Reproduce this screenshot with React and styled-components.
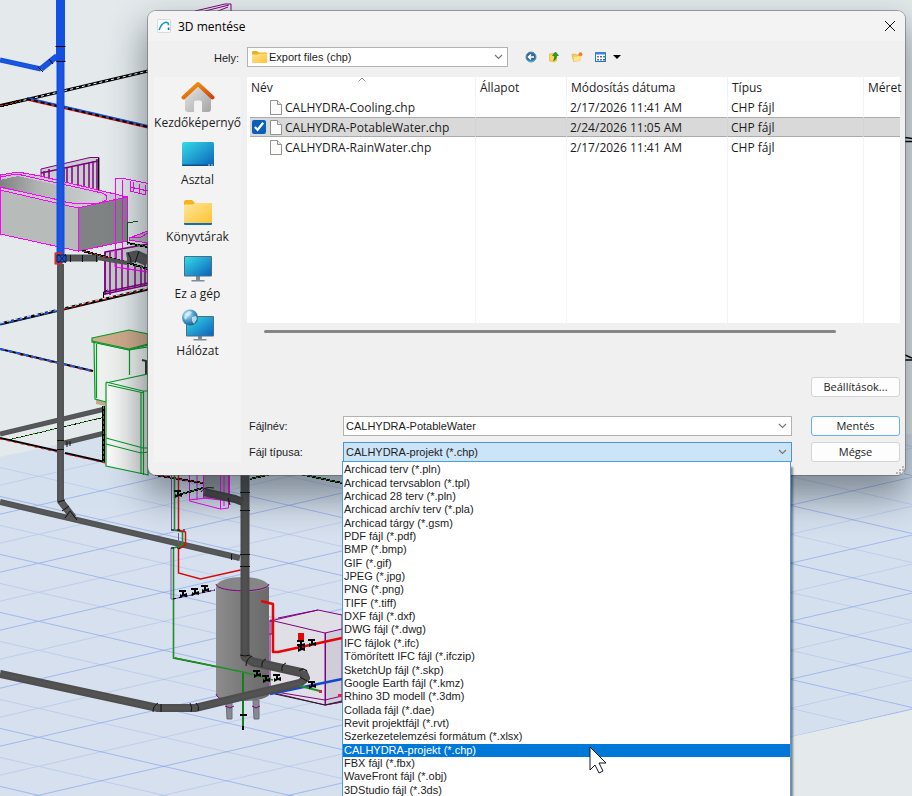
import React, {useState} from 'react';
import styled, {createGlobalStyle} from 'styled-components';

const GlobalStyle = createGlobalStyle`
  * {
    box-sizing: border-box;
  }

  body {
    margin: 0;
    overflow: hidden;
    background: #e4eaec;
  }

  button, input, select {
    font: inherit;
    color: inherit;
  }
`;

const Desktop = styled.main`
  position: relative;
  min-height: 100vh;
  padding: 11px 7px 0 148px;
  overflow: hidden;
  font-family: "Liberation Sans", Arial, sans-serif;
  font-size: 11px;
  color: #1c1c1c;
`;

const SceneSvg = styled.svg`
  position: absolute;
  top: 0;
  left: 0;
  width: 100%;
  height: 100%;
`;

const Dialog = styled.section`
  position: relative;
  background: #f0f0f0;
  border-radius: 8px;
  box-shadow: 0 0 0 1px rgba(90, 90, 90, 0.5), 0 18px 36px 4px rgba(20, 30, 40, 0.45);
`;

const TitleBar = styled.header`
  display: flex;
  align-items: center;
  gap: 7px;
  height: 30px;
  padding: 0 8px 0 9px;
  background: #f3f3f3;
  border-radius: 8px 8px 0 0;
`;

const Title = styled.h1`
  flex: 1;
  margin: 0;
  font-family: "Open Sans", "Noto Sans", sans-serif;
  font-size: 12px;
  font-weight: 400;
  color: #000;
`;

const IconButton = styled.button`
  display: flex;
  align-items: center;
  justify-content: center;
  padding: 0;
  border: 0;
  background: none;
`;

const LocationBar = styled.div`
  display: flex;
  align-items: flex-start;
  height: 36px;
  padding-top: 6px;
`;

const LocationLabel = styled.label`
  width: 91px;
  margin-right: 8px;
  line-height: 22px;
  text-align: right;
`;

const Tools = styled.div`
  display: flex;
  align-items: center;
  gap: 9px;
  height: 20px;
  margin-left: 16px;
`;

const ViewTools = styled.div`
  display: flex;
  align-items: center;
  gap: 6px;
`;

const Field = styled.div`
  position: relative;
  display: flex;
  align-items: center;
  width: ${({$width}) => $width || 'auto'};
  height: 20px;
  border: 1px solid ${({$open}) => ($open ? '#4a95d6' : '#b2b2b2')};
  background: ${({$open}) => ($open ? '#cce4f7' : '#fff')};

  > select, > input {
    flex: 1;
    min-width: 0;
    height: 18px;
    padding: 0 0 0 2px;
    border: 0;
    outline: 0;
    appearance: none;
    background: none;
  }

  > .folder {
    margin-left: 4px;
  }

  > .chevron {
    margin-right: 4px;
    pointer-events: none;
  }
`;

const Body = styled.div`
  display: flex;
  gap: 6px;
  padding: 0 5px 13px 6px;
`;

const Places = styled.nav`
  display: flex;
  flex-direction: column;
  gap: 5px;
  width: 87px;
  padding-top: 4px;
  background: #f3f3f3;
`;

const Place = styled.button`
  display: flex;
  flex-direction: column;
  align-items: center;
  padding: 0;
  border: 0;
  background: none;
  font-family: "Open Sans", "Noto Sans", sans-serif;
  font-size: 12px;
  line-height: 20px;
  white-space: nowrap;
`;

const Content = styled.div`
  flex: 1;
  min-width: 0;
`;

const FileTable = styled.table`
  width: 100%;
  height: 246px;
  table-layout: fixed;
  border-collapse: separate;
  border-spacing: 0;
  background: #fff;
  font-family: "Open Sans", "Noto Sans", sans-serif;
  font-size: 12px;
`;

const HeadCell = styled.th`
  position: relative;
  width: ${({$width}) => $width || 'auto'};
  height: 20px;
  padding: 0 0 0 4px;
  border-left: 1px solid #eef1f8;
  font-weight: 400;
  text-align: left;
  white-space: nowrap;

  &:first-child {
    border-left: 0;
  }
`;

const SortMark = styled.svg`
  position: absolute;
  top: 0;
  left: 111px;
`;

const FileRow = styled.tr`
  td {
    height: ${({$filler}) => ($filler ? 'auto' : '20px')};
    padding: 0 0 0 3px;
    border-left: 1px solid #f1f4fb;
    line-height: 17px;
    white-space: nowrap;
    ${({$selected}) => $selected && `
      background: #d9d9d9;
      border-left-color: #d2d5dc;
      box-shadow: inset 0 1px #ababab, inset 0 -1px #ababab;
    `}
  }

  td:first-child {
    border-left: 3px solid #fff;
    padding-left: 2px;
  }
`;

const FileName = styled.label`
  display: flex;
  align-items: center;
  gap: 3px;
`;

const Tick = styled.input`
  width: 14px;
  height: 14px;
  margin: 0 1px 0 0;
  accent-color: #0a5fb8;
  visibility: ${({checked}) => (checked ? 'visible' : 'hidden')};
`;

const ScrollTrack = styled.div`
  margin: 7px 14px 44px 17px;
`;

const ScrollThumb = styled.div`
  width: 92%;
  height: 3px;
  border-radius: 2px;
  background: #868686;
`;

const Form = styled.form`
  display: grid;
  grid-template-columns: 94px 1fr 89px;
  column-gap: 0;
  row-gap: 6px;
  align-items: center;
  padding-left: 2px;
`;

const Button = styled.button`
  grid-column: 3;
  height: 20px;
  padding: 0;
  border: 1px solid ${({$primary}) => ($primary ? '#69b0e8' : '#d4d4d4')};
  border-radius: 3px;
  background: #fdfdfd;
  font-family: "Open Sans", "Noto Sans", sans-serif;
  font-size: 11px;
  line-height: 18px;
`;

const SettingsButton = styled(Button)`
  margin-bottom: 13px;
`;

const FormField = styled(Field)`
  margin-right: 19px;
`;

const TypeList = styled.ul`
  position: absolute;
  z-index: 2;
  top: 100%;
  left: -2px;
  display: flex;
  flex-direction: column;
  width: calc(100% + 2px);
  height: 336px;
  margin: 0;
  padding: 1px 0 0;
  border: solid #4a9fe3;
  border-width: 1px 1px 0;
  background: #fff;
  box-shadow: 2px 6px 2px rgba(0, 0, 0, 0.45);
  list-style: none;
`;

const TypeOption = styled.li`
  position: relative;
  display: flex;
  flex: 1;
  align-items: center;
  min-height: 0;
  padding-left: 1px;
  line-height: 13px;
  white-space: nowrap;
  background: ${({$active}) => ($active ? '#0078d7' : 'transparent')};
  color: ${({$active}) => ($active ? '#fff' : 'inherit')};
`;

const Pointer = styled.svg`
  position: absolute;
  z-index: 3;
  top: 2px;
  left: 55%;
`;

const Grip = styled.svg`
  position: absolute;
  right: 1px;
  bottom: 1px;
`;

const files = [
  {name: 'CALHYDRA-Cooling.chp', date: '2/17/2026 11:41 AM', type: 'CHP fájl'},
  {name: 'CALHYDRA-PotableWater.chp', date: '2/24/2026 11:05 AM', type: 'CHP fájl'},
  {name: 'CALHYDRA-RainWater.chp', date: '2/17/2026 11:41 AM', type: 'CHP fájl'},
];

const fileTypes = [
  'Archicad terv (*.pln)',
  'Archicad tervsablon (*.tpl)',
  'Archicad 28 terv (*.pln)',
  'Archicad archív terv (*.pla)',
  'Archicad tárgy (*.gsm)',
  'PDF fájl (*.pdf)',
  'BMP (*.bmp)',
  'GIF (*.gif)',
  'JPEG (*.jpg)',
  'PNG (*.png)',
  'TIFF (*.tiff)',
  'DXF fájl (*.dxf)',
  'DWG fájl (*.dwg)',
  'IFC fájlok (*.ifc)',
  'Tömörített IFC fájl (*.ifczip)',
  'SketchUp fájl (*.skp)',
  'Google Earth fájl (*.kmz)',
  'Rhino 3D modell (*.3dm)',
  'Collada fájl (*.dae)',
  'Revit projektfájl (*.rvt)',
  'Szerkezetelemzési formátum (*.xlsx)',
  'CALHYDRA-projekt (*.chp)',
  'FBX fájl (*.fbx)',
  'WaveFront fájl (*.obj)',
  '3DStudio fájl (*.3ds)',
];

const Chevron = () => (
  <svg className="chevron" width="9" height="6" viewBox="0 0 9 6" fill="none" stroke="#777" strokeWidth="1.200" aria-hidden="true">
    <path d="M1 1l3.500 3.500L8 1"/>
  </svg>
);

const Gradients = () => (
  <svg width="0" height="0" style={{position: 'absolute'}} aria-hidden="true">
    <defs>
      <linearGradient id="screen" x1="0" y1="0" x2="1" y2="1">
        <stop offset="0" stopColor="#35dbe6"/>
        <stop offset="1" stopColor="#0b62bd"/>
      </linearGradient>
      <linearGradient id="folder" x1="0" y1="0" x2="1" y2="1">
        <stop offset="0" stopColor="#ffe69b"/>
        <stop offset="1" stopColor="#fdc331"/>
      </linearGradient>
      <linearGradient id="wall" x1="0" y1="0" x2="1" y2="1">
        <stop offset="0" stopColor="#e9e9e9"/>
        <stop offset="1" stopColor="#a3a3a3"/>
      </linearGradient>
      <linearGradient id="roof" x1="0" y1="0" x2="1" y2="1">
        <stop offset="0" stopColor="#f8a010"/>
        <stop offset="1" stopColor="#d0400c"/>
      </linearGradient>
      <radialGradient id="globe" cx="0.35" cy="0.3" r="0.8">
        <stop offset="0" stopColor="#c9ebf8"/>
        <stop offset="0.5" stopColor="#4a9cc9"/>
        <stop offset="1" stopColor="#14517f"/>
      </radialGradient>
    </defs>
  </svg>
);

const HomeIcon = () => (
  <svg width="34" height="32" viewBox="0 0 34 32" aria-hidden="true">
    <path d="M17 4L4 16v12c0 2 1 3 3 3h6v-9c0-1.500 .8-2.500 2-2.500h4c1.200 0 2 1 2 2.500v9h6c2 0 3-1 3-3V16z" fill="url(#wall)"/>
    <path d="M2.500 16.500L17 3l14.500 13.500" fill="none" stroke="url(#roof)" strokeWidth="4" strokeLinejoin="round" strokeLinecap="round"/>
  </svg>
);

const DesktopIcon = () => (
  <svg width="34" height="32" viewBox="0 0 34 32" aria-hidden="true">
    <rect x="1" y="4" width="32" height="24" rx="1.500" fill="url(#screen)"/>
    <path d="M1 26.500h32v.5a1 1 0 0 1-1 1H2a1 1 0 0 1-1-1z" fill="#0c5184"/>
    <path d="M27 27h2M30 27h2" stroke="#bfe2f5"/>
  </svg>
);

const LibraryIcon = () => (
  <svg width="34" height="32" viewBox="0 0 34 32" aria-hidden="true">
    <path d="M3 7c0-1 .7-2 2-2h6l3 3h16a1 1 0 0 1 1 1v16H3z" fill="#f4b21c"/>
    <path d="M3 11c0-1 .5-1.500 1.500-1.500h7L14 8h16a1 1 0 0 1 1 1v19H3z" fill="url(#folder)"/>
    <path d="M3 28h28v1a1 1 0 0 1-1 1H4a1 1 0 0 1-1-1z" fill="#0b6fc2"/>
  </svg>
);

const ComputerIcon = () => (
  <svg width="34" height="32" viewBox="0 0 34 32" aria-hidden="true">
    <path d="M15 24h4v4h4.500v1.500h-13V28H15z" fill="#7f8c97"/>
    <rect x="3" y="4" width="28" height="20.500" rx="1" fill="#4e6c80"/>
    <rect x="4" y="5" width="26" height="18.500" fill="url(#screen)"/>
  </svg>
);

const NetworkIcon = () => (
  <svg width="34" height="32" viewBox="0 0 34 32" aria-hidden="true">
    <path d="M17 27h4v3h4.500v1.500h-13V30H17z" fill="#7f8c97"/>
    <rect x="5" y="7" width="28" height="20.500" rx="1" fill="#4e6c80"/>
    <rect x="6" y="8" width="26" height="18.500" fill="url(#screen)"/>
    <circle cx="9" cy="8.500" r="8" fill="url(#globe)"/>
    <path d="M4 5l4-3 3 1-2 3-3 2-1 3-2-2zM11 8l4-1 1 3-3 5-2-3z" fill="#e0f2f8" opacity="0.75"/>
  </svg>
);

const places = [
  {label: 'Kezdőképernyő', icon: HomeIcon},
  {label: 'Asztal', icon: DesktopIcon},
  {label: 'Könyvtárak', icon: LibraryIcon},
  {label: 'Ez a gép', icon: ComputerIcon},
  {label: 'Hálózat', icon: NetworkIcon},
];

const FolderIcon = () => (
  <svg className="folder" width="15" height="12" viewBox="0 0 15 12" aria-hidden="true">
    <path d="M0 1.500C0 .7.500 0 1.500 0H5l1.500 1.500H14a1 1 0 0 1 1 1V11H0z" fill="#eeae22"/>
    <path d="M0 3.500h5.500L7 2.500h8V11a1 1 0 0 1-1 1H1a1 1 0 0 1-1-1z" fill="url(#folder)"/>
  </svg>
);

const PageIcon = () => (
  <svg width="12" height="15" viewBox="0 0 12 15" fill="#fbfbfb" stroke="#919191" aria-hidden="true">
    <path d="M.5.500h7l4 4v10H.5z"/>
    <path d="M7.500.500v4h4" fill="#e9e9e9"/>
  </svg>
);

const AppIcon = () => (
  <svg width="14" height="14" viewBox="0 0 14 14" fill="none" aria-hidden="true">
    <rect x=".5" y=".5" width="13" height="13" rx="1" fill="#fff" stroke="#d9d9d9"/>
    <path d="M2 11c1.500-4 3.500-7.500 7-7.800 1.800 0 2.600 1 2.600 3" stroke="#129bd0" strokeWidth="1.600"/>
    <path d="M11.600 8.500v2.500" stroke="#0d77b5" strokeWidth="1.600"/>
  </svg>
);

const BackIcon = () => (
  <svg width="14" height="14" viewBox="0 0 14 14" aria-hidden="true">
    <circle cx="7" cy="7" r="5" fill="#2c6c9e" stroke="#6f8596"/>
    <path d="M3 9c2 2.500 6 2.500 8 0-1 4-7 4-8 0z" fill="#45c4ec"/>
    <path d="M10 7H5M7 4.500L4.500 7 7 9.500" fill="none" stroke="#fff" strokeWidth="1.500"/>
  </svg>
);

const UpIcon = () => (
  <svg width="14" height="14" viewBox="0 0 14 14" aria-hidden="true">
    <path d="M2.500 4l4-1 1 1v8l-5-1z" fill="#f7d65a" stroke="#d9b13c" strokeWidth=".6"/>
    <path d="M7 12l3-1V6l-3 1z" fill="#f2c53f"/>
    <path d="M8.500 2l3 3.500h-2c0 2.500-.5 4-3 5 1-1.500 1.300-3 1-5h-2z" fill="#2c9b25" stroke="#19701a" strokeWidth=".6"/>
  </svg>
);

const NewFolderIcon = () => (
  <svg width="14" height="14" viewBox="0 0 14 14" aria-hidden="true">
    <path d="M2 4.500l3.500-.5 1 1h4.500L10 10.500l-6.500 1z" fill="#f4cd55" stroke="#d6a83a" strokeWidth=".6"/>
    <path d="M4 7l7.500-1L10 10.500l-6.500 1z" fill="#fce592"/>
    <circle cx="10.500" cy="4.300" r="2" fill="#f08035"/>
  </svg>
);

const ViewIcon = () => (
  <svg width="14" height="14" viewBox="0 0 14 14" aria-hidden="true">
    <rect x="2.500" y="2.500" width="10" height="9" fill="#fff" stroke="#2f6fc9"/>
    <path d="M2 2h11v2.500H2z" fill="#3c82dc"/>
    <path d="M4 6h2v1.500H4zM4 9h2v1.500H4zM7 9h2v1.500H7z" fill="#4c78bb"/>
    <path d="M7 6h2v1.500H7zM10 9h2v1.500h-2z" fill="#5d6570"/>
    <path d="M10 6h2v1.500h-2z" fill="#37a148"/>
  </svg>
);

const MenuArrow = () => (
  <svg width="8" height="4" viewBox="0 0 8 4" aria-hidden="true">
    <path d="M0 0h8L4 4z"/>
  </svg>
);

// Floor grid: two line families that mirror each other, every second line is fainter
const gridSteps = Array.from({length: 34}, (_, i) => i - 17);

const FloorGrid = () => (
  <g clipPath="url(#floorClip)" stroke="#7799ec">
    {gridSteps.map((step) => (
      <g key={step} opacity={step % 2 === 0 ? 0.55 : 0.25}>
        <line x1="0" y1={554.4 + step * 29} x2="912" y2={765.5 + step * 29}/>
        <line x1="0" y1={572.200 + step * 29} x2="912" y2={361.100 + step * 29}/>
      </g>
    ))}
  </g>
);

const Pipe = ({d, width, color = '#525354'}) => (
  <g fill="none" strokeLinejoin="round">
    <path d={d} stroke={color} strokeWidth={width}/>
    <path d={d} stroke="#fff" strokeOpacity="0.03" strokeWidth={width / 2}/>
  </g>
);

const ThinPipe = ({d, color, width = 2}) => (
  <g fill="none" shapeRendering="crispEdges">
    <path d={d} stroke="#000" strokeWidth={width}/>
    <path d={d} stroke={color} strokeWidth="1" strokeDasharray="3 2"/>
  </g>
);

const Valve = ({x, y}) => (
  <path transform={`translate(${x} ${y})`} d="M-4-3h7v2h-2v2l3-1v4l-3-1-4 2v-4l2 1v-3h-3z" fill="#050505"/>
);

const Scene = () => (
  <SceneSvg viewBox="0 0 912 796" preserveAspectRatio="xMinYMin slice" aria-hidden="true">
    <defs>
      <clipPath id="floorClip">
        <path d="M0 457L105 434H912V710L523 796H0z"/>
      </clipPath>
      <linearGradient id="tank">
        <stop offset="0" stopColor="#8c8c8c"/>
        <stop offset="0.6" stopColor="#767676"/>
        <stop offset="1" stopColor="#6a6a6a"/>
      </linearGradient>
      <linearGradient id="tub">
        <stop offset="0" stopColor="#7d8281"/>
        <stop offset="0.35" stopColor="#aeb3b2"/>
        <stop offset="1" stopColor="#cfd4d4"/>
      </linearGradient>
      <linearGradient id="machine">
        <stop offset="0" stopColor="#fbfbfb"/>
        <stop offset="1" stopColor="#dedede"/>
      </linearGradient>
    </defs>
    <path d="M0 457L105 434H912V710L523 796H0z" fill="#d6e0ee"/>
    <FloorGrid/>

    <g fill="none" stroke="#000">
      <path d="M0 105.500L27 99.500 148 71" strokeWidth="3"/>
      <path d="M0 105.500L27 99.500 148 71" stroke="#fff" strokeDasharray="3 3"/>
      <path d="M905 137.500l7 1M905 141.500h7M905 355l7 3M905 360h7" strokeWidth="1.500"/>
    </g>
    <ThinPipe d="M0 106l20-5" color="#d31a12" width={3}/>
    <path d="M27 99L148 127" stroke="#e01810" strokeWidth="3"/>
    <path d="M27 98L148 126" stroke="#1d57d8" strokeWidth="2"/>
    <path d="M27 99L148 127" stroke="#000" strokeWidth="2" strokeDasharray="4 3"/>

    <g stroke="#800080" fill="none">
      <path d="M41 169L90 157.500h9V192L41 183z" fill="#c9cdd0"/>
      <path d="M41 173l57-12M44 171v14M49 169v16M64 167v20M67 167v20M72 166v22M78 165v23M84 163v26M89 162v28M93 161v30M97 159v33" strokeWidth="1.500"/>
      <path d="M98.500 158v34" stroke="#000"/>
      <path d="M195 11l30-7h6v8M205 11l24-6M218 11l10-4"/>
    </g>

    <g stroke="#f0f" fill="none" shapeRendering="crispEdges">
      <path d="M115.500 178.500h8l24.500 5v90H122l-6-3z" fill="#dfe4e5" fillOpacity="0.6"/>
      <path d="M0 175l18-3 22 4 87 21-49 11L0 190z" fill="#c5caca"/>
      <path d="M0 180l18-4 86 20-4 6-30 0L0 188z" fill="url(#tub)" stroke="none"/>
      <path d="M0 190l78 18v43L0 234z" fill="#b7bcbb"/>
      <path d="M78 208l49-11v44l-49 10z" fill="#808383"/>
      <path d="M0 177l17-3 85 19c8 3 6 8-3 10-15 2-34 0-40-3L0 187"/>
      <path d="M115.500 178v92M122.500 180v93M130 181v10l16 4M133 182v10M139 184v9M145 185v9M130 187l18 4"/>
      <path d="M129 238l19-7v12l-19-3z" fill="#b2b5b6"/>
      <path d="M129 238l12-1 7-4"/>
      <path d="M127.500 245v-22l11-2" stroke="#115a15"/>
    </g>

    <g stroke="#800080" strokeWidth="1.500" fill="none">
      <path d="M105 252l43-8v41l-43 9z" fill="#c6c9cc"/>
      <path d="M105 252v43M110 252v43M116 251v41M122 250v41M128 254v35M135 264v24M141 265v22M145 265v21M105 292l43-9"/>
      <path d="M115 250v17l33 5M122 250v18l26 4" stroke="#f0f" strokeWidth="1"/>
      <path d="M103.500 300v-8l4-2" stroke="#000" strokeWidth="1"/>
    </g>
    <ThinPipe d="M82 251l40 10 26 8" color="#238a23"/>
    <ThinPipe d="M84 251l26 7" color="#df1a12"/>
    <ThinPipe d="M127 243l21 4" color="#238a23"/>
    <Pipe d="M66 258h32" width={7}/>
    <Pipe d="M97 258l30 5" width={4}/>
    <Pipe d="M127 258l10-2 11 5" width={11}/>
    <path d="M70.500 255v7M82.500 255v7M96.500 255v7M128 253q4 5 3 12M139 251l-4 12" stroke="#111" fill="none"/>

    <path d="M0 324L148 289" stroke="#000" strokeWidth="3"/>
    <path d="M0 324L60 310" stroke="#1b50cf" strokeWidth="2" strokeDasharray="5 4"/>
    <path d="M64 309L148 289" stroke="#e31b13" strokeDasharray="4 4"/>
    <path d="M0 323L148 288" stroke="#fff" strokeDasharray="4 3"/>
    <path d="M0 349L93 371" stroke="#000" strokeWidth="2"/>
    <path d="M0 349L93 371" stroke="#2458dc" strokeWidth="2" strokeDasharray="5 3"/>
    <path d="M20 355L93 372" stroke="#e31b13" strokeDasharray="3 7"/>

    <Pipe d="M0 434L105 409" width={5}/>
    <ThinPipe d="M8 440L105 417" color="#238a23" width={1}/>
    <Pipe d="M64 443L105 433" width={5}/>
    <path d="M0 438L58 451M65 453L105 462" stroke="#000" strokeWidth="2"/>
    <path d="M0 439L105 463" stroke="#e31b13" strokeDasharray="3 4"/>
    <ThinPipe d="M103.500 406v56" color="#238a23" width={3}/>

    <g stroke="#049a27" fill="none" strokeWidth="1.200">
      <path d="M96 399l9 3v4l-9-2z" fill="#c9a989" stroke="none"/>
      <path d="M94 342l35 8 19-3v50l-42 5-11-3z" fill="#eef0ee"/>
      <path d="M92 338l37-8 19 4v11l-19 5-37-8z" fill="#cfab8c"/>
      <path d="M92 341l37 8 19-5M96.500 344v54M129.500 350v25"/>
      <path d="M142 360l4 1v13" stroke="#333" strokeWidth="2"/>
      <path d="M106 383l42-9v101l-4-1-38-8z" fill="url(#machine)"/>
      <path d="M106 382l37 9h5M108 385l36 8M143.500 391v84M141 392v82M106 438l37 10h5M106 444l35 9 7-1"/>
    </g>

    <Pipe d="M60.500 0v255" width={8} color="#1450df"/>
    <Pipe d="M0 60l41 9" width={5} color="#1450df"/>
    <Pipe d="M41 69l16-13" width={6} color="#1450df"/>
    <path d="M38 67l5 5M49 59l4 5" stroke="#000"/>
    <path d="M60.500 0v62" stroke="#1450df" strokeWidth="9"/>
    <path d="M55.500 46.500h10M56.500 61.500h9" stroke="#000"/>
    <Pipe d="M60.500 264v237l13 17" width={7}/>
    <rect x="55" y="253" width="7" height="11" fill="#a84850" stroke="#e02020"/>
    <path d="M57 255h9v7h-9zM58 254l8 9M66 254l-8 9" fill="#2255bb" stroke="#041b58"/>
    <path d="M57 440.500h7M57 449.500h7M58 502l7-2M62 511l7-5M67 441v6M70 441v5" stroke="#111"/>

    <Pipe d="M0 502l240 56" width={6}/>
    <path d="M65 518l5-7 7 9M231.500 554v6" stroke="#111" fill="none"/>

    <g stroke="#f0f" fill="none">
      <path d="M203.500 475h26v26l-26-3z" fill="#999da5"/>
      <path d="M189.500 475v26l31 8 8-1v-33M197 475v25M220.500 475v34M224 475v31M189 500l35-4"/>
    </g>
    <ThinPipe d="M155 475l48 8" color="#d31a12"/>
    <ThinPipe d="M178 495l25-7" color="#238a23"/>
    <path d="M171.500 475v55h7M178.500 533v10M215 590l-42 9h-2v-51l7-1" stroke="#7d52b8" fill="none"/>
    <path d="M174.500 475v55l8 2v13l-9 3v110l70 14 77 19" stroke="#1f8f25" strokeWidth="1.600" fill="none"/>
    <path d="M178.500 475v55l7 2v13l-7 4v24l22 6 40-9" stroke="#d40c0c" strokeWidth="1.500" fill="none"/>
    <path d="M171 530h14M171 548h10M173 599l42-9M175 658l67 14" stroke="#000" strokeDasharray="3 3" fill="none"/>
    <Valve x={178} y={493}/>
    <Valve x={183} y={593}/>
    <Valve x={195} y={591}/>
    <Valve x={205} y={588}/>

    <g stroke="#800080" fill="none">
      <path d="M270 621l48-11 24 5v87l-17 3-55-13z" fill="#e1dfe6"/>
      <path d="M325 633l17-4v73l-17 3z" fill="#cfcdd8"/>
      <path d="M270 620l55 13M325.500 633v72M278 618l40-8M270 691l55 9 17-4"/>
      <path d="M275 694l50 11 17-4" stroke="#222"/>
    </g>

    <g stroke="#800080">
      <path d="M226 700h6v19h-5zM253 700h6v19h-5z" fill="#858a92" stroke="#6b6f76"/>
      <path d="M225 706l5 2 4-2M252 706l4 2 4-2" fill="none"/>
      <path d="M216 587v108c6 8 47 8 53 0V587z" fill="url(#tank)" stroke="none"/>
      <path d="M216 586c4-12 49-12 53 0-4 8-49 8-53 0z" fill="#868686" stroke="none"/>
      <path d="M216 584c1 9 52 9 53 0M216 694c2 7 14 6 26 5M269 621h3v13h-3" fill="none"/>
    </g>
    <path d="M175 658l68 14 30 8" stroke="#1f8f25" strokeWidth="1.500" fill="none"/>
    <ThinPipe d="M250 479l25-6M300 474l42 9" color="#238a23"/>
    <Pipe d="M245 475v182l8 5 50 11" width={9} color="#4b4b4b"/>
    <Pipe d="M204 492l31 7 8 3" width={8} color="#444"/>
    <path d="M201 492q3-6 13-4M228 498l2 7M240 492.500h10M240 510.500h10M240 554.500h10M240 566.500h10M240 655q5 2 10 0M246 666q0-7 6-10M262 667q-1-6 4-8M282 671q-1-6 4-8" stroke="#111" fill="none"/>
    <path d="M261 601l12 3v48l5 0 64-14" stroke="#e40707" strokeWidth="2.500" fill="none" strokeLinejoin="round"/>
    <rect x="298" y="633" width="6" height="8" fill="#e40707"/>
    <Valve x={301} y={643}/>
    <Valve x={301} y={647}/>
    <Valve x={312} y={642}/>
    <path d="M270 694l72-15" stroke="#1348cc" strokeWidth="2.500"/>
    <path d="M243 673v57" stroke="#14801c" strokeWidth="2"/>
    <path d="M240 715h7M243 730v-4" stroke="#000" strokeWidth="2"/>
    <Pipe d="M303 671l3 7-6 5L195 708h-37L0 674" width={8} color="#4e4e4f"/>
    <path d="M153 712q0-6 5-9M161 704v8M190 703q3 4 1 9M196 703q4 3 2 8M299 671q4-4 8 0M300 677l7 4" stroke="#111" fill="none"/>
    <path d="M300 686l20 5" stroke="#1f8f25" strokeWidth="2"/>
    <Valve x={257} y={673}/>
    <Valve x={266} y={678}/>
    <Valve x={277} y={677}/>
    <Valve x={312} y={684}/>
    <path d="M319 690h3v3h-3zM338 694h4v3h-4z" fill="#e0204a"/>
  </SceneSvg>
);

const columns = [
  {label: 'Név', width: '228px'},
  {label: 'Állapot', width: '91px'},
  {label: 'Módosítás dátuma', width: '161px'},
  {label: 'Típus'},
  {label: 'Méret', width: '37px'},
];

const FileList = ({selected, onSelect}) => (
  <FileTable>
    <thead>
      <tr>
        {columns.map(({label, width}, index) => (
          <HeadCell key={label} $width={width} scope="col">
            {label}
            {index === 0 && (
              <SortMark width="8" height="5" viewBox="0 0 8 5" fill="none" stroke="#8a8a8a">
                <path d="M.5 4.500L4 1l3.500 3.500"/>
              </SortMark>
            )}
          </HeadCell>
        ))}
      </tr>
    </thead>
    <tbody>
      {files.map(({name, date, type}) => (
        <FileRow key={name} $selected={name === selected}>
          <td>
            <FileName>
              <Tick type="checkbox" checked={name === selected} onChange={() => onSelect(name)}/>
              <PageIcon/>
              <span>{name}</span>
            </FileName>
          </td>
          <td/>
          <td>{date}</td>
          <td>{type}</td>
          <td/>
        </FileRow>
      ))}
      <FileRow $filler aria-hidden="true">
        {columns.map(({label}) => <td key={label}/>)}
      </FileRow>
    </tbody>
  </FileTable>
);

const App = () => {
  const [selected, setSelected] = useState('CALHYDRA-PotableWater.chp');
  const [fileName, setFileName] = useState('CALHYDRA-PotableWater');
  const [fileType, setFileType] = useState('CALHYDRA-projekt (*.chp)');

  return (
    <Desktop>
      <GlobalStyle/>
      <Gradients/>
      <Scene/>
      <Dialog role="dialog" aria-labelledby="title">
        <TitleBar>
          <AppIcon/>
          <Title id="title">3D mentése</Title>
          <IconButton type="button" aria-label="Bezárás">
            <svg width="14" height="14" viewBox="0 0 14 14" stroke="#111" aria-hidden="true">
              <path d="M2 2l10 10M12 2L2 12"/>
            </svg>
          </IconButton>
        </TitleBar>
        <LocationBar>
          <LocationLabel htmlFor="location">Hely:</LocationLabel>
          <Field $width="261px">
            <FolderIcon/>
            <select id="location">
              <option>Export files (chp)</option>
            </select>
            <Chevron/>
          </Field>
          <Tools>
            <IconButton type="button" aria-label="Vissza"><BackIcon/></IconButton>
            <IconButton type="button" aria-label="Fel"><UpIcon/></IconButton>
            <IconButton type="button" aria-label="Új mappa"><NewFolderIcon/></IconButton>
            <ViewTools>
              <IconButton type="button" aria-label="Nézet"><ViewIcon/></IconButton>
              <IconButton type="button" aria-label="Nézet menü"><MenuArrow/></IconButton>
            </ViewTools>
          </Tools>
        </LocationBar>
        <Body>
          <Places>
            {places.map(({label, icon: Icon}) => (
              <Place key={label} type="button">
                <Icon/>
                {label}
              </Place>
            ))}
          </Places>
          <Content>
            <FileList selected={selected} onSelect={setSelected}/>
            <ScrollTrack><ScrollThumb/></ScrollTrack>
            <Form onSubmit={(event) => event.preventDefault()}>
              <SettingsButton type="button">Beállítások...</SettingsButton>
              <label htmlFor="file-name">Fájlnév:</label>
              <FormField>
                <input id="file-name" value={fileName} onChange={(event) => setFileName(event.target.value)}/>
                <Chevron/>
              </FormField>
              <Button type="submit" $primary>Mentés</Button>
              <label htmlFor="file-type">Fájl típusa:</label>
              <FormField $open>
                <select id="file-type" value={fileType} onChange={(event) => setFileType(event.target.value)}>
                  {fileTypes.map((type) => <option key={type}>{type}</option>)}
                </select>
                <Chevron/>
                <TypeList role="listbox" aria-label="Fájl típusa">
                  {fileTypes.map((type) => (
                    <TypeOption
                      key={type}
                      role="option"
                      aria-selected={type === fileType}
                      $active={type === fileType}
                      onClick={() => setFileType(type)}
                    >
                      {type}
                      {type === fileType && (
                        <Pointer width="19" height="28" viewBox="0 0 19 28" aria-hidden="true">
                          <path d="M1 1v23l5-5 4 8 4-2-4-8h7z" fill="#fff" stroke="#14142c"/>
                        </Pointer>
                      )}
                    </TypeOption>
                  ))}
                </TypeList>
              </FormField>
              <Button type="button">Mégse</Button>
            </Form>
          </Content>
        </Body>
        <Grip width="8" height="8" viewBox="0 0 8 8" fill="#b5b5b5" aria-hidden="true">
          <path d="M6 0h2v2H6zM6 3h2v2H6zM6 6h2v2H6zM3 3h2v2H3zM3 6h2v2H3zM0 6h2v2H0z"/>
        </Grip>
      </Dialog>
    </Desktop>
  );
};

export default App;
